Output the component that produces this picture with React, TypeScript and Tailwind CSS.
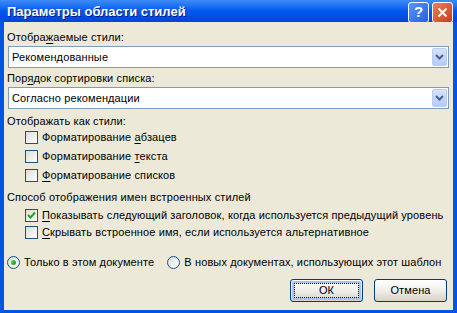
import { ReactNode } from "react"

const font = { fontFamily: '"Liberation Sans", Arial, sans-serif' }

function Mn({ children }: { children: ReactNode }) {
	return <span className="underline underline-offset-2">{children}</span>
}

function Combo({ value }: { value: string }) {
	return (
		<div className="mx-[2px] flex h-[22px] items-center border border-[#7F9DB9] bg-white pl-[3px] pr-[1px]">
			<span className="flex-1 text-[11px] tracking-[0.12px]">{value}</span>
			<div className="flex h-[18px] w-[15px] items-center justify-center rounded-[2px] border border-[#B9CCF6] bg-gradient-to-b from-[#D6E3FD] to-[#B5CAF8]">
				<svg width="9" height="6" viewBox="0 0 9 6">
					<path d="M1 1 L4.5 4.5 L8 1" stroke="#4D6185" strokeWidth="2" fill="none" />
				</svg>
			</div>
		</div>
	)
}

function Check({ checked = false }: { checked?: boolean }) {
	return (
		<div className="flex h-[13px] w-[13px] shrink-0 items-center justify-center border border-[#1C5180] bg-gradient-to-br from-[#DCDCD7] to-white">
			{checked && (
				<svg width="9" height="9" viewBox="0 0 9 9">
					<path d="M1 4 L3.5 6.5 L8 1.5" stroke="#21A121" strokeWidth="2" fill="none" />
				</svg>
			)}
		</div>
	)
}

function Radio({ checked = false }: { checked?: boolean }) {
	return (
		<div className="flex h-[13px] w-[13px] shrink-0 items-center justify-center rounded-full border border-[#1C5180] bg-gradient-to-br from-[#DCDCD7] to-white">
			{checked && <div className="h-[5px] w-[5px] rounded-full bg-gradient-to-br from-[#55D551] to-[#139613]" />}
		</div>
	)
}

function CheckRow({ checked, tight, children }: { checked?: boolean; tight?: boolean; children: ReactNode }) {
	return (
		<div className={`flex items-center gap-[4px] pl-[19px] ${tight ? "h-[17px]" : "h-[19px]"}`}>
			<Check checked={checked} />
			<span className="text-[11px] tracking-[0.12px]">{children}</span>
		</div>
	)
}

export default function App() {
	return (
		<div className="flex h-[313px] w-[457px] flex-col bg-[#0055E5] text-black" style={font}>
			<div className="flex h-[22px] items-center bg-gradient-to-b from-[#3D8CF7] via-[#0058EE] to-[#0046D5] pl-[7px] pr-[4px]">
				<span className="flex-1 pt-[2px] text-[13px] font-bold text-white [text-shadow:1px_1px_0_#0A1883]">
					Параметры области стилей
				</span>
				<div className="flex gap-[3px] pt-[3px]">
					<div className="flex h-[21px] w-[21px] items-center justify-center rounded-[3px] border border-white bg-gradient-to-br from-[#5B95F8] to-[#2160E0] text-[15px] font-bold text-white">
						?
					</div>
					<div className="flex h-[21px] w-[21px] items-center justify-center rounded-[3px] border border-white bg-gradient-to-br from-[#E8805E] to-[#C9381A]">
						<svg width="11" height="11" viewBox="0 0 11 11">
							<path d="M1.5 1.5 L9.5 9.5 M9.5 1.5 L1.5 9.5" stroke="white" strokeWidth="2" />
						</svg>
					</div>
				</div>
			</div>
			<div className="mx-[4px] mb-[3px] flex flex-1 flex-col bg-[#ECE9D8] px-[2px] tracking-[0.12px]">
				<div className="mt-[9px] h-[13px] pl-[1px] text-[11px] leading-[13px]">
					Отобра<Mn>ж</Mn>аемые стили:
				</div>
				<div className="mt-[2px]">
					<Combo value="Рекомендованные" />
				</div>
				<div className="mt-[4px] h-[13px] pl-[1px] text-[11px] leading-[13px]">
					Пор<Mn>я</Mn>док сортировки списка:
				</div>
				<div className="mt-[2px]">
					<Combo value="Согласно рекомендации" />
				</div>
				<div className="mt-[6px] h-[13px] pl-[1px] text-[11px] leading-[13px]">
					Отображать как стили:
				</div>
				<div className="flex flex-col">
					<CheckRow>
						Форматирование <Mn>а</Mn>бзацев
					</CheckRow>
					<CheckRow>
						Форматирование <Mn>т</Mn>екста
					</CheckRow>
					<CheckRow>
						<Mn>Ф</Mn>орматирование списков
					</CheckRow>
				</div>
				<div className="mt-[6px] h-[13px] pl-[1px] text-[11px] leading-[13px]">
					Способ отображения имен встроенных стилей
				</div>
				<div className="mt-[3px] flex flex-col">
					<CheckRow checked tight>
						<Mn>П</Mn>оказывать следующий заголовок, когда используется предыдущий уровень
					</CheckRow>
					<CheckRow tight>
						<Mn>С</Mn>крывать встроенное имя, если используется альтернативное
					</CheckRow>
				</div>
				<div className="mt-[13px] flex h-[16px] items-center pl-[1px] text-[11px]">
					<Radio checked />
					<span className="ml-[4px]">Только в этом документе</span>
					<span className="ml-[13px]">
						<Radio />
					</span>
					<span className="ml-[4px]">В новых документах, использующих этот шаблон</span>
				</div>
				<div className="mt-[9px] flex justify-end gap-[11px] pr-[4px]">
					<div className="flex h-[23px] w-[73px] items-center justify-center rounded-[3px] border border-[#003C74] bg-gradient-to-b from-white via-[#F0EFEA] to-[#D8D2C6] p-[1px]">
						<div className="flex h-full w-full items-center justify-center rounded-[2px] border-2 border-[#A5C4F5]">
							<div className="flex h-full w-full items-center justify-center border border-dotted border-black text-[11px]">
								ОК
							</div>
						</div>
					</div>
					<div className="flex h-[23px] w-[73px] items-center justify-center rounded-[3px] border border-[#003C74] bg-gradient-to-b from-white via-[#F0EFEA] to-[#D8D2C6] text-[11px]">
						Отмена
					</div>
				</div>
			</div>
		</div>
	)
}
